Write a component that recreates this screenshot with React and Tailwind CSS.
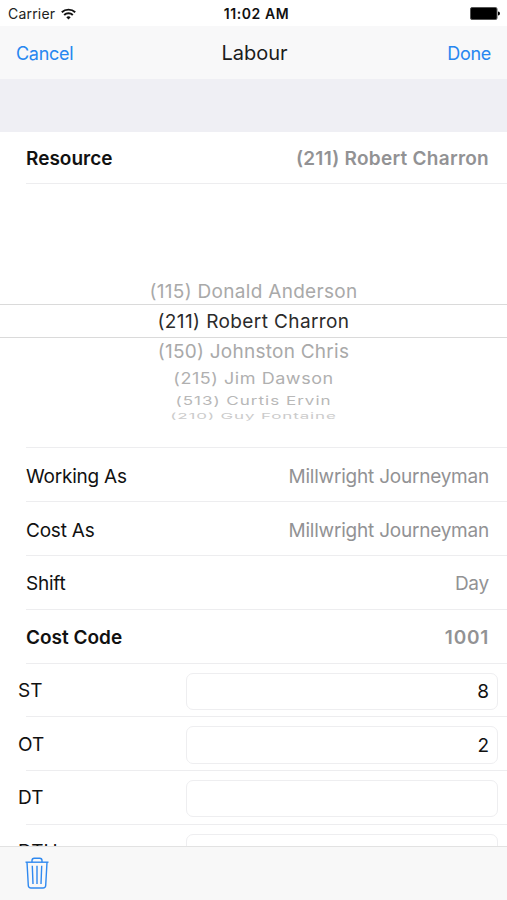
import React, { useState } from "react";

const resources = [
  { name: "(115) Donald Anderson", className: "h-[28px] leading-[30px] text-[19px] tracking-[0.3px] text-[#a9a9a9]" },
  { name: "(211) Robert Charron", className: "h-[34px] leading-[32px] text-[19px] tracking-[0.4px] text-[#2b2b2b] border-y border-[#dadada]" },
  { name: "(150) Johnston Chris", className: "h-[26px] leading-[26px] text-[19px] tracking-[0.25px] text-[#a9a9a9]" },
  { name: "(215) Jim Dawson", className: "h-[28px] leading-[28px] text-[18px] tracking-[0.55px] text-[#b0b0b0] scale-y-[0.87]" },
  { name: "(513) Curtis Ervin", className: "h-[16px] leading-[16px] text-[17px] tracking-[1px] text-[#b8b8b8] scale-y-[0.72]" },
  { name: "(210) Guy Fontaine", className: "h-[16px] leading-[16px] text-[17px] tracking-[0.85px] text-[#cccccc] scale-y-[0.48]" },
];

const details = [
  { label: "Working As", value: "Millwright Journeyman" },
  { label: "Cost As", value: "Millwright Journeyman" },
  { label: "Shift", value: "Day" },
  { label: "Cost Code", value: "1001", bold: true },
];

const StatusBar = () => (
  <div className="grid grid-cols-3 items-center h-[26px] bg-white pl-[8px] pr-[7px]">
    <div className="flex items-center gap-[6px] pt-px">
      <span className="text-[14px] tracking-[0.2px] text-[#222222]">Carrier</span>
      <svg width="15" height="12" viewBox="0 0 15 12" fill="none" stroke="#111111" strokeWidth="1.9">
        <path d="M0.8 4.3a9.6 9.6 0 0 1 13.4 0" />
        <path d="M3.2 7a6.1 6.1 0 0 1 8.6 0" />
        <path d="M7.5 11.5L5.3 9.2a3.2 3.2 0 0 1 4.4 0z" fill="#111111" stroke="none" />
      </svg>
    </div>
    <span className="pl-[5px] text-center text-[14px] font-semibold tracking-[0.55px] text-[#111111]">
      11:02 AM
    </span>
    <svg className="justify-self-end" width="30" height="13" viewBox="0 0 30 13">
      <rect x="0.5" y="0.5" width="26.5" height="12" rx="1.5" fill="black" stroke="#555555" />
      <path d="M28 4.5a2 2 0 0 1 0 4z" fill="black" />
    </svg>
  </div>
);

const DetailRow = ({ label, value, bold }) => (
  <div className="h-[53.89px] pl-[26px]">
    <div
      className={`flex h-full items-center justify-between border-b border-[#ededef] pr-[18px] pt-[5px] text-[19px] ${bold ? "font-semibold" : "tracking-[-0.22px]"}`}
    >
      <span>{label}</span>
      <span className={bold ? "tracking-[0.75px] text-[#929294]" : "text-[#929294]"}>{value}</span>
    </div>
  </div>
);

const HoursRow = ({ label, value, onChange }) => (
  <div className="h-[53.7px]">
    <div className="flex h-[52.7px] items-center justify-between pl-[18px] pr-[9px] pt-[3px]">
      <span className="text-[19px]">{label}</span>
      <input
        type="text"
        name={label}
        value={value}
        onChange={onChange}
        className="h-[37.5px] w-[312px] rounded-[7px] border border-[#eeeef0] px-[8px] text-right text-[19px] outline-none"
      />
    </div>
    <div className="ml-[26px] h-px bg-[#ededef]" />
  </div>
);

const App = () => {
  const [hours, setHours] = useState({ ST: "8", OT: "2", DT: "", DTH: "" });

  const handleChange = (event) => {
    const { name, value } = event.target;
    setHours((prev) => ({ ...prev, [name]: value }));
  };

  return (
    <div className="flex h-[900px] w-[507px] flex-col overflow-hidden bg-white font-['Inter',sans-serif] text-[#111111]">
      <StatusBar />
      <header className="grid h-[53px] shrink-0 grid-cols-3 items-center bg-[#f8f8f9] px-[16px] text-[18px] text-[#2787f0]">
        <button className="pt-[2px] text-left tracking-[-0.3px]">Cancel</button>
        <h1 className="pl-[2px] text-center text-[20px] text-[#1c1c1c]">Labour</h1>
        <button className="pt-[2px] text-right tracking-[-0.3px]">Done</button>
      </header>
      <div className="h-[53px] shrink-0 bg-[#efeff4]" />

      <main className="min-h-0 flex-1 overflow-hidden">
        <div className="h-[52px] pl-[26px]">
          <div className="flex h-full items-center justify-between border-b border-[#ededef] pr-[18px] pt-[3px] text-[19px] font-semibold">
            <span>Resource</span>
            <span className="tracking-[0.26px] text-[#929294]">(211) Robert Charron</span>
          </div>
        </div>

        <div className="h-[264px] pt-[92px] text-center">
          {resources.map((resource) => (
            <div key={resource.name} className={resource.className}>
              <span className="relative top-px">{resource.name}</span>
            </div>
          ))}
        </div>
        <div className="-mt-px ml-[26px] h-px bg-[#ededef]" />

        {details.map((row) => (
          <DetailRow key={row.label} {...row} />
        ))}
        {Object.keys(hours).map((key) => (
          <HoursRow key={key} label={key} value={hours[key]} onChange={handleChange} />
        ))}
      </main>

      <footer className="h-[54px] shrink-0 border-t border-[#e2e2e2] bg-[#f8f8f8] pl-[25px] pt-[10px]">
        <button className="block">
          <svg width="24" height="32" viewBox="0 0 24 32" fill="none" stroke="#2f89f0" strokeWidth="1.4" strokeLinejoin="round">
            <path d="M0.5 5.2H23.5" />
            <path d="M7 5.2V3.5Q7 1.2 9.3 1.2H14.7Q17 1.2 17 3.5V5.2" />
            <path d="M2 5.2L3.3 28.5Q3.5 31 6 31H18Q20.5 31 20.7 28.5L22 5.2" />
            <path d="M7.3 8.8L8 27M12 8.8V27M16.7 8.8L16 27" />
          </svg>
        </button>
      </footer>
    </div>
  );
};

export default App;
